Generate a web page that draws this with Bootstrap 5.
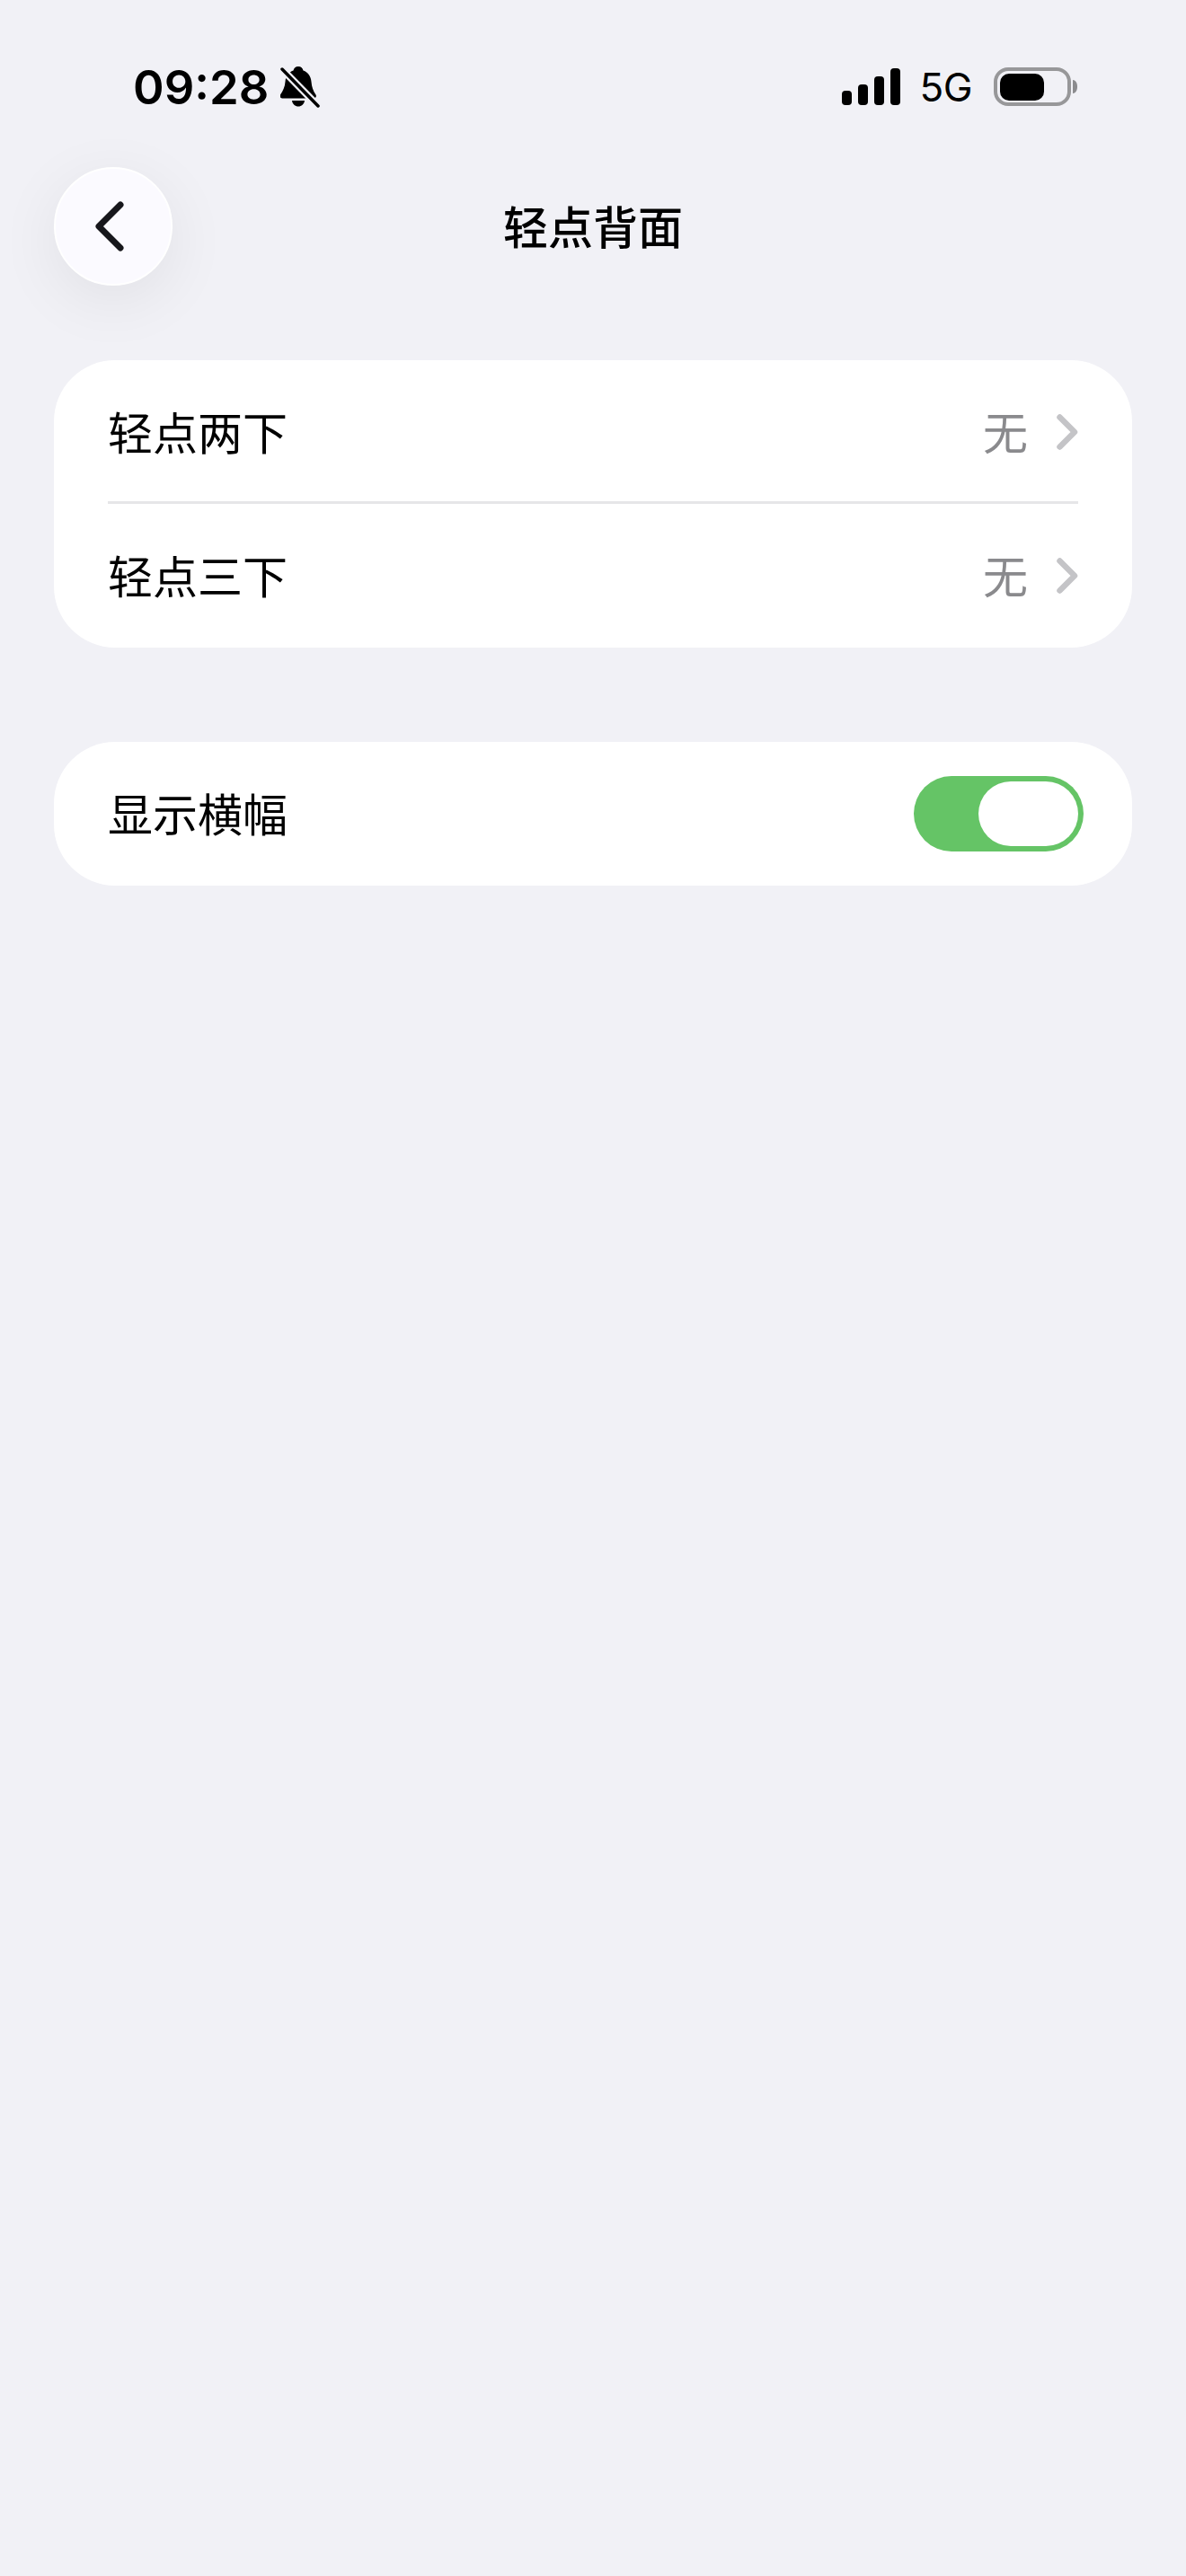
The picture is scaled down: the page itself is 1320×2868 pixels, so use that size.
<!DOCTYPE html>
<html lang="zh-CN">
<head>
<meta charset="utf-8">
<title>轻点背面</title>
<link href="https://cdn.jsdelivr.net/npm/bootstrap@5.3.0/dist/css/bootstrap.min.css" rel="stylesheet">
<style>
html,body{height:100%}
body{background:#f1f1f6;color:#000;font-family:"Noto Sans CJK SC","Noto Sans",sans-serif}
.phone-frame{width:1320px;height:2868px;overflow:hidden;padding:0 60px}
.status-row{height:186px;padding:8px 60px 0 88px}
.clock{font-family:Inter,"Liberation Sans",sans-serif;font-weight:600;font-size:52.500px;line-height:1;letter-spacing:0;color:#000;margin-right:5px}
.net-label{font-family:Inter,"Liberation Sans",sans-serif;font-size:44px;line-height:1;letter-spacing:-.5px}
.signal-bars{margin-right:-4px}
.nav-row{height:132px;margin-bottom:83px;display:grid;grid-template-columns:132px 1fr 132px;align-items:center}
.back-btn{width:132px;height:132px;border-radius:50%;background:#fbfaff;border:2px solid #fff;box-shadow:0 16px 70px rgba(0,0,0,.07);padding:0 8px 0 0}
.page-title{font-size:50px;font-weight:500;line-height:1;margin:0 0 4px;text-align:center;letter-spacing:0}
.group-box{background:#fff;border-radius:68px;padding-left:60px;padding-right:60px;overflow:hidden}
.group-box + .group-box{margin-top:105px}
.set-row{height:160px;font-size:50px;line-height:1}
.set-label{padding-bottom:5px}
.set-row + .set-row{box-shadow:0 -3px 0 #e6e6e8}
.set-val{color:#8a8a8d;margin-right:32px;padding-bottom:5px}
.toggle-track{width:189px;height:84px;border-radius:42px;background:#65c466;padding:6px;margin-right:-6px;margin-left:auto}
.toggle-thumb{width:111px;height:72px;border-radius:36px;background:#fff}
</style>
</head>
<body>
<div class="phone-frame">
  <div class="status-row d-flex align-items-center justify-content-between">
    <div class="d-flex align-items-center gap-2">
      <span class="clock">09:28</span>
      <svg width="44" height="46" viewBox="0 0 44 46" aria-hidden="true">
        <path d="M20 0c3 0 5 2 5.500 4.500C31 6.500 34 11 34.500 17c.5 6 2 10 5 14.500 1 1.500 0 4-2 4H2c-2 0-3-2.500-2-4C3 27 5 23 5.500 17 6 11 9 6.500 14.500 4.500 15 2 17 0 20 0z" fill="#000"/>
        <path d="M13 38h14c-.5 4-3.500 6.500-7 6.500s-6.500-2.500-7-6.500z" fill="#000"/>
        <path d="M2 3 42 44" stroke="#f1f1f6" stroke-width="8"/>
        <path d="M2 3 42 44" stroke="#000" stroke-width="3.500" stroke-linecap="round"/>
      </svg>
    </div>
    <div class="d-flex align-items-center" style="gap:24px">
      <svg class="signal-bars" width="66" height="42" viewBox="0 0 66 42" aria-hidden="true" fill="#000">
        <rect x="0" y="25" width="11" height="16" rx="4"/>
        <rect x="18" y="18" width="11" height="23" rx="4"/>
        <rect x="36" y="9" width="11" height="32" rx="4"/>
        <rect x="54" y="0" width="11" height="41" rx="4"/>
      </svg>
      <span class="net-label">5G</span>
      <svg width="94" height="44" viewBox="0 0 94 44" aria-hidden="true">
        <rect x="2" y="2" width="82" height="39" rx="14" fill="none" stroke="#979799" stroke-width="4"/>
        <rect x="7" y="7" width="49" height="30" rx="10" fill="#000"/>
        <path d="M88 14c3.500 .5 5 3.500 5 7.500s-1.500 7-5 7.500z" fill="#8b8b8e"/>
      </svg>
    </div>
  </div>

  <div class="nav-row">
    <button type="button" class="back-btn d-flex align-items-center justify-content-center" aria-label="返回">
      <svg width="40" height="60" viewBox="0 0 40 60" aria-hidden="true">
        <path d="M32 6 8 30l24 24" fill="none" stroke="#17171c" stroke-width="7" stroke-linecap="round" stroke-linejoin="round"/>
      </svg>
    </button>
    <h1 class="page-title">轻点背面</h1>
    <span></span>
  </div>

  <div class="group-box">
    <div class="set-row d-flex align-items-center justify-content-between">
      <span class="set-label">轻点两下</span>
      <span class="d-flex align-items-center"><span class="set-val">无</span>
        <svg width="24" height="40" viewBox="0 0 24 40" aria-hidden="true"><path d="M3.500 3.500 20 20 3.500 36.500" fill="none" stroke="#c4c4c7" stroke-width="6.500" stroke-linecap="round" stroke-linejoin="round"/></svg>
      </span>
    </div>
    <div class="set-row d-flex align-items-center justify-content-between">
      <span class="set-label">轻点三下</span>
      <span class="d-flex align-items-center"><span class="set-val">无</span>
        <svg width="24" height="40" viewBox="0 0 24 40" aria-hidden="true"><path d="M3.500 3.500 20 20 3.500 36.500" fill="none" stroke="#c4c4c7" stroke-width="6.500" stroke-linecap="round" stroke-linejoin="round"/></svg>
      </span>
    </div>
  </div>

  <div class="group-box">
    <div class="set-row d-flex align-items-center justify-content-between">
      <span class="set-label">显示横幅</span>
      <div class="toggle-track d-flex justify-content-end"><div class="toggle-thumb"></div></div>
    </div>
  </div>
</div>
<script src="https://cdn.jsdelivr.net/npm/bootstrap@5.3.0/dist/js/bootstrap.bundle.min.js"></script>
</body>
</html>
